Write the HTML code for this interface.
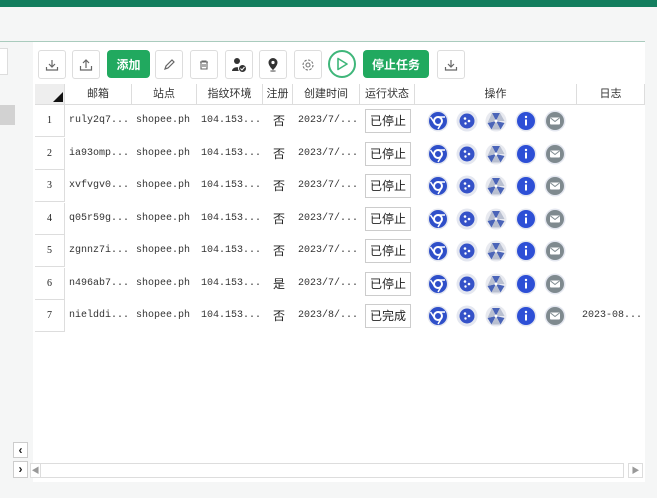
<!DOCTYPE html><html><head><meta charset="utf-8"><style>
*{box-sizing:border-box;margin:0;padding:0}
body{width:657px;height:498px;overflow:hidden;background:#f5f6f6;font-family:"Liberation Sans","Noto Sans CJK SC",sans-serif;position:relative;font-size:11px;color:#222}
.a{position:absolute}
.top{left:0;top:0;width:657px;height:7px;background:#137e5e}
.main{left:33px;top:42px;width:612px;height:440px;background:#fff}
.gl{left:0;top:41px;width:645px;height:1px;background:#a9cbbd}
.btn{position:absolute;top:50px;height:29px;width:28px;border:1px solid #ddd;border-radius:3px;background:#fff;display:flex;align-items:center;justify-content:center}
.gbtn{position:absolute;top:50px;height:28px;background:#21a95f;border-radius:4px;color:#fff;font-weight:bold;font-size:12px;display:flex;align-items:center;justify-content:center}
.hd{position:absolute;top:84px;height:21px;border-right:1px solid #ddd;border-bottom:1px solid #ddd;text-align:center;line-height:20px;font-size:11px;color:#333;background:#fff}
.c{position:absolute;height:32px;line-height:32px;font-family:"Liberation Mono","Noto Sans CJK SC",monospace;font-size:10px;color:#333}
.z{position:absolute;height:32px;line-height:32px;font-size:12px}
.num{position:absolute;left:35px;width:30px;height:32px;border-right:1px solid #ddd;border-bottom:1px solid #ddd;text-align:center;line-height:32px;font-size:10px;font-family:"Liberation Serif",serif}
.st{position:absolute;left:365px;width:46px;height:24px;border:1px solid #ccc;text-align:center;line-height:22px;font-size:12px;background:#fff}
</style></head><body>
<div class="a top"></div>
<div class="a main"></div>
<div class="a gl"></div>
<div class="a" style="left:0;top:48px;width:8px;height:27px;background:#fff;border:1px solid #ddd;border-left:none"></div>
<div class="a" style="left:0;top:105px;width:15px;height:20px;background:#d2d2d2"></div>

<div class="btn" style="left:38px"><svg width="14" height="14" viewBox="0 0 14 14" fill="none" stroke="#666" stroke-width="1.2"><path d="M7 2v7M4 6l3 3 3-3M1.5 9v3h11V9"/></svg></div>
<div class="btn" style="left:72px"><svg width="14" height="14" viewBox="0 0 14 14" fill="none" stroke="#666" stroke-width="1.2"><path d="M7 10V2M4 5l3-3 3 3M1.5 8v4h11V8"/></svg></div>
<div class="gbtn" style="left:107px;width:43px">添加</div>
<div class="btn" style="left:155px"><svg width="14" height="14" viewBox="0 0 14 14" fill="none" stroke="#666" stroke-width="1.2"><path d="M3 11l1-3 6-6 2 2-6 6z"/></svg></div>
<div class="btn" style="left:190px"><svg width="12" height="12" viewBox="0 0 12 12" fill="none" stroke="#666" stroke-width="1.1"><path d="M2 3h8M4 3V2h4v1M3 3v7h6V3M5 5v3M7 5v3"/></svg></div>
<div class="btn" style="left:225px"><svg width="18" height="18" viewBox="0 0 18 18"><circle cx="7" cy="5" r="3" fill="#333"/><path d="M2 15c0-5 10-5 10 0z" fill="#333"/><circle cx="12.5" cy="12.5" r="4" fill="#333" stroke="#fff"/><path d="M10.5 12.5l1.5 1.5 2.5-3" stroke="#fff" fill="none"/></svg></div>
<div class="btn" style="left:259px"><svg width="14" height="16" viewBox="0 0 14 16"><path d="M7 1a4.5 4.5 0 0 0-4.5 4.5C2.5 9 7 13 7 13s4.5-4 4.5-7.5A4.5 4.5 0 0 0 7 1z" fill="#333"/><circle cx="7" cy="5.5" r="1.6" fill="#fff"/><ellipse cx="7" cy="14" rx="3" ry="1" fill="#999"/></svg></div>
<div class="btn" style="left:294px"><svg width="14" height="14" viewBox="0 0 14 14" fill="none" stroke="#777" stroke-width="1.1"><circle cx="7" cy="7" r="2"/><circle cx="7" cy="7" r="5" stroke-dasharray="2.5 1.4"/></svg></div>
<div class="a" style="left:328px;top:50px;width:28px;height:28px;border-radius:50%;border:2px solid #3fb67a;display:flex;align-items:center;justify-content:center"><svg width="12" height="14" viewBox="0 0 12 14"><path d="M2 1.5v11l9-5.5z" fill="none" stroke="#3fb67a" stroke-width="1.6" stroke-linejoin="round"/></svg></div>
<div class="gbtn" style="left:363px;width:66px">停止任务</div>
<div class="btn" style="left:437px"><svg width="14" height="14" viewBox="0 0 14 14" fill="none" stroke="#666" stroke-width="1.2"><path d="M7 2v7M4 6l3 3 3-3M1.5 9v3h11V9"/></svg></div>

<div class="hd" style="left:35px;width:30px;background:#eee"><svg class="a" style="left:18px;top:8px" width="10" height="10"><path d="M10 0v10H0z" fill="#111"/></svg></div>
<div class="hd" style="left:65px;width:67px">邮箱</div>
<div class="hd" style="left:132px;width:65px">站点</div>
<div class="hd" style="left:197px;width:66px">指纹环境</div>
<div class="hd" style="left:263px;width:30px">注册</div>
<div class="hd" style="left:293px;width:67px">创建时间</div>
<div class="hd" style="left:360px;width:55px">运行状态</div>
<div class="hd" style="left:415px;width:162px">操作</div>
<div class="hd" style="left:577px;width:68px">日志</div>

<div id="rows"></div>
<script>
var d=[["1","ruly2q7...","否","已停止"],["2","ia93omp...","否","已停止"],["3","xvfvgv0...","否","已停止"],["4","q05r59g...","否","已停止"],["5","zgnnz7i...","否","已停止"],["6","n496ab7...","是","已停止"],["7","nielddi...","否","已完成"]];
var h="";
d.forEach(function(r,i){var y=105+i*32.5;var m=y+16;
h+='<div class="num" style="top:'+y+'px">'+r[0]+'</div>';
h+='<div class="c" style="left:69px;top:'+y+'px">'+r[1]+'</div>';
h+='<div class="c" style="left:136px;top:'+y+'px">shopee.ph</div>';
h+='<div class="c" style="left:201px;top:'+y+'px">104.153...</div>';
h+='<div class="z" style="left:273px;top:'+y+'px">'+r[2]+'</div>';
h+='<div class="c" style="left:298px;top:'+y+'px">2023/'+(i==6?'8':'7')+'/...</div>';
h+='<div class="st" style="top:'+(m-12)+'px">'+r[3]+'</div>';
var xs=[427,456,485,515,544];
h+='<svg class="a" style="left:'+xs[0]+'px;top:'+(m-11)+'px" width="22" height="22"><circle cx="11" cy="11" r="10.5" fill="#e4e7f0"/><circle cx="11" cy="11" r="9" fill="#2f4fc9"/><circle cx="11" cy="11" r="4" fill="none" stroke="#fff" stroke-width="2"/><path d="M11 7h7M14.5 13l-3.5 6M7.5 13L3.5 7" stroke="#fff" stroke-width="1.5"/></svg>';
h+='<svg class="a" style="left:'+xs[1]+'px;top:'+(m-11)+'px" width="22" height="22"><circle cx="11" cy="11" r="10.5" fill="#e4e7f0"/><circle cx="11" cy="11" r="7.5" fill="#3552c8"/><circle cx="9" cy="8.5" r="1.3" fill="#fff"/><circle cx="13" cy="11" r="1.3" fill="#fff"/><circle cx="9.5" cy="13.5" r="1.2" fill="#fff"/></svg>';
h+='<svg class="a" style="left:'+xs[2]+'px;top:'+(m-11)+'px" width="22" height="22"><circle cx="11" cy="11" r="10.5" fill="#e8eaf0"/><path d="M11 11L7 3h8zM11 11l8.5 2-4 6.5zM11 11l-4.5 8.5L2.5 13z" fill="#4a64b8"/><path d="M11 11L15 3l4.5 8zM11 11l-4.5 8.5h9zM11 11L2.5 13 7 3z" fill="#b8bfd0"/><circle cx="11" cy="11" r="1.5" fill="#fff"/></svg>';
h+='<svg class="a" style="left:'+xs[3]+'px;top:'+(m-11)+'px" width="22" height="22"><circle cx="11" cy="11" r="10.5" fill="#e4e7f0"/><circle cx="11" cy="11" r="9" fill="#2d4fd6"/><rect x="10" y="9.5" width="2" height="6" fill="#fff"/><circle cx="11" cy="7" r="1.2" fill="#fff"/></svg>';
h+='<svg class="a" style="left:'+xs[4]+'px;top:'+(m-11)+'px" width="22" height="22"><circle cx="11" cy="11" r="10.5" fill="#e4e7f0"/><circle cx="11" cy="11" r="9" fill="#7f8a8f"/><rect x="6" y="7.5" width="10" height="7" rx="1" fill="#fff"/><path d="M6.5 8l4.5 3.5L15.5 8" stroke="#7f8a8f" fill="none"/></svg>';
if(i==6)h+='<div class="c" style="left:582px;top:'+y+'px">2023-08...</div>';
});
document.getElementById('rows').innerHTML=h;
</script>
<div class="a" style="left:13px;top:442px;width:15px;height:16px;border:1px solid #ccc;background:#fff;font-weight:bold;text-align:center;line-height:14px;font-size:12px">&lsaquo;</div>
<div class="a" style="left:13px;top:461px;width:15px;height:17px;border:1px solid #ccc;background:#fff;font-weight:bold;text-align:center;line-height:15px;font-size:12px">&rsaquo;</div>
<div class="a" style="left:30px;top:463px;width:594px;height:15px;border:1px solid #ddd;background:#fff"></div>
<div class="a" style="left:31px;top:464px;width:10px;height:13px;border-right:1px solid #ddd;color:#999;font-size:8px;text-align:center;line-height:13px">&#9664;</div>
<div class="a" style="left:628px;top:463px;width:15px;height:15px;border:1px solid #ddd;background:#fff;color:#999;font-size:8px;text-align:center;line-height:13px">&#9654;</div>
</body></html>
